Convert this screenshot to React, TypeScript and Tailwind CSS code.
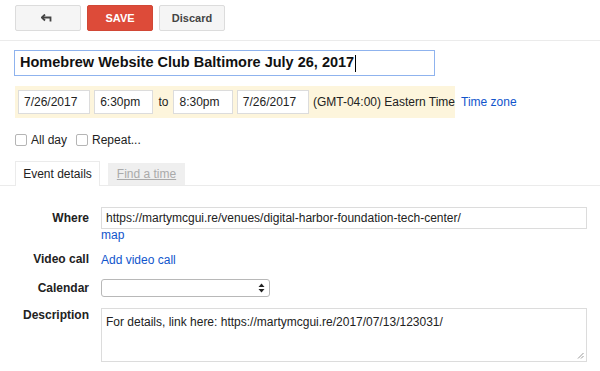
import React from 'react';

const font = { fontFamily: '"Liberation Sans", Arial, sans-serif' };

function BackArrow() {
  return (
    <svg width="14" height="8" viewBox="0 0 14 8" fill="none">
      <path d="M4 0.5 L0.8 3.5 L4 6.5" stroke="#444" strokeWidth="1.8" fill="none" />
      <path d="M1.5 3.5 H9.5 V7.5" stroke="#444" strokeWidth="1.8" fill="none" />
    </svg>
  );
}

function Field({ label, children, top = false }: { label: string; children: React.ReactNode; top?: boolean }) {
  return (
    <div className={`flex ${top ? 'items-start' : 'items-center'}`}>
      <div className="w-[89px] shrink-0 text-right text-[12px] leading-[14px] font-bold text-[#222]">{label}</div>
      <div className="ml-[12px] flex-1">{children}</div>
    </div>
  );
}

export default function App() {
  return (
    <div className="w-[600px] h-[371px] bg-white overflow-hidden text-[#222]" style={font}>
      {/* toolbar */}
      <div className="h-[41px] border-b border-[#ebebeb] flex items-start pt-[5px] pl-[15px] gap-[6px]">
        <button className="w-[66px] h-[26px] rounded-[2px] border border-[#dcdcdc] bg-[#f5f5f5] flex items-center justify-center">
          <BackArrow />
        </button>
        <button className="w-[66px] h-[26px] rounded-[2px] border border-[#d14836] bg-[#dd4b39] text-white text-[11px] font-bold">
          SAVE
        </button>
        <button className="w-[66px] h-[26px] rounded-[2px] border border-[#dcdcdc] bg-[#f5f5f5] text-[#444] text-[11px] font-bold">
          Discard
        </button>
      </div>

      {/* title */}
      <div className="pl-[14px] pt-[9px]">
        <div className="w-[421px] h-[26px] border border-[#8fb3ee] flex items-center pl-[5px] text-[14.5px] font-bold text-[#111]">
          Homebrew Website Club Baltimore July 26, 2017
          <span className="inline-block w-[1px] h-[17px] bg-black ml-[1px]" />
        </div>
      </div>

      {/* date/time */}
      <div className="pl-[15px] pt-[10px] flex items-center">
        <div className="w-[440px] h-[32px] bg-[#fdf5dc] flex items-center pl-[3px] gap-[4px] text-[12px] whitespace-nowrap">
          <div className="w-[73px] h-[24px] bg-white border border-[#dcdcdc] flex items-center pl-[5px]">7/26/2017</div>
          <div className="w-[60px] h-[24px] bg-white border border-[#dcdcdc] flex items-center pl-[5px]">6:30pm</div>
          <span className="px-[1px]">to</span>
          <div className="w-[60px] h-[24px] bg-white border border-[#dcdcdc] flex items-center pl-[5px]">8:30pm</div>
          <div className="w-[73px] h-[24px] bg-white border border-[#dcdcdc] flex items-center pl-[5px]">7/26/2017</div>
          <span>(GMT-04:00) Eastern Time</span>
        </div>
        <span className="ml-[6px] text-[12px] text-[#1155cc]">Time zone</span>
      </div>

      {/* checkboxes */}
      <div className="pl-[15px] mt-[14px] h-[16px] flex items-center text-[12px]">
        <span className="w-[12px] h-[12px] rounded-[2px] border border-[#b5b5b5] bg-white" />
        <span className="ml-[4px]">All day</span>
        <span className="ml-[9px] w-[12px] h-[12px] rounded-[2px] border border-[#b5b5b5] bg-white" />
        <span className="ml-[4px]">Repeat...</span>
      </div>

      {/* tabs */}
      <div className="mt-[13px] border-b border-[#ebebeb] flex items-end pl-[15px] gap-[8px] h-[25px]">
        <div className="w-[85px] h-[25px] border border-b-0 border-[#ebebeb] bg-white -mb-[1px] flex items-center justify-center text-[12px] text-[#222]">
          Event details
        </div>
        <div className="w-[77px] h-[22px] bg-[#efefef] flex items-center justify-center text-[12px] text-[#aaa] underline">
          Find a time
        </div>
      </div>

      {/* form */}
      <div className="pt-[21px] flex flex-col">
        <Field label="Where">
          <div className="w-[486px] h-[22px] border border-[#dcdcdc] flex items-center pl-[4px] text-[12px]">
            https://martymcgui.re/venues/digital-harbor-foundation-tech-center/
          </div>
        </Field>
        <div className="pl-[101px] text-[12px] text-[#1155cc] leading-[13px]">map</div>
        <div className="mt-[5px]">
          <Field label="Video call">
            <span className="text-[12px] leading-[14px] text-[#1155cc]">Add video call</span>
          </Field>
        </div>
        <div className="mt-[8px]">
          <Field label="Calendar">
            <div className="w-[169px] h-[18px] rounded-[3px] border border-[#b8b8b8] bg-white flex items-center justify-end pr-[4px]">
              <svg width="7" height="10" viewBox="0 0 7 10">
                <path d="M0.5 4 L3.5 0.5 L6.5 4 Z" fill="#222" />
                <path d="M0.5 6 L3.5 9.5 L6.5 6 Z" fill="#222" />
              </svg>
            </div>
          </Field>
        </div>
        <div className="mt-[11px]">
          <Field label="Description" top>
            <div className="relative w-[486px] h-[54px] border border-[#dcdcdc] pl-[4px] pt-[6px] text-[12px] leading-[14px]">
              For details, link here: https://martymcgui.re/2017/07/13/123031/
              <svg className="absolute right-[2px] bottom-[2px]" width="7" height="7" viewBox="0 0 7 7">
                <path d="M6.5 1 L1 6.5 M6.5 4 L4 6.5" stroke="#999" strokeWidth="1" />
              </svg>
            </div>
          </Field>
        </div>
      </div>
    </div>
  );
}
